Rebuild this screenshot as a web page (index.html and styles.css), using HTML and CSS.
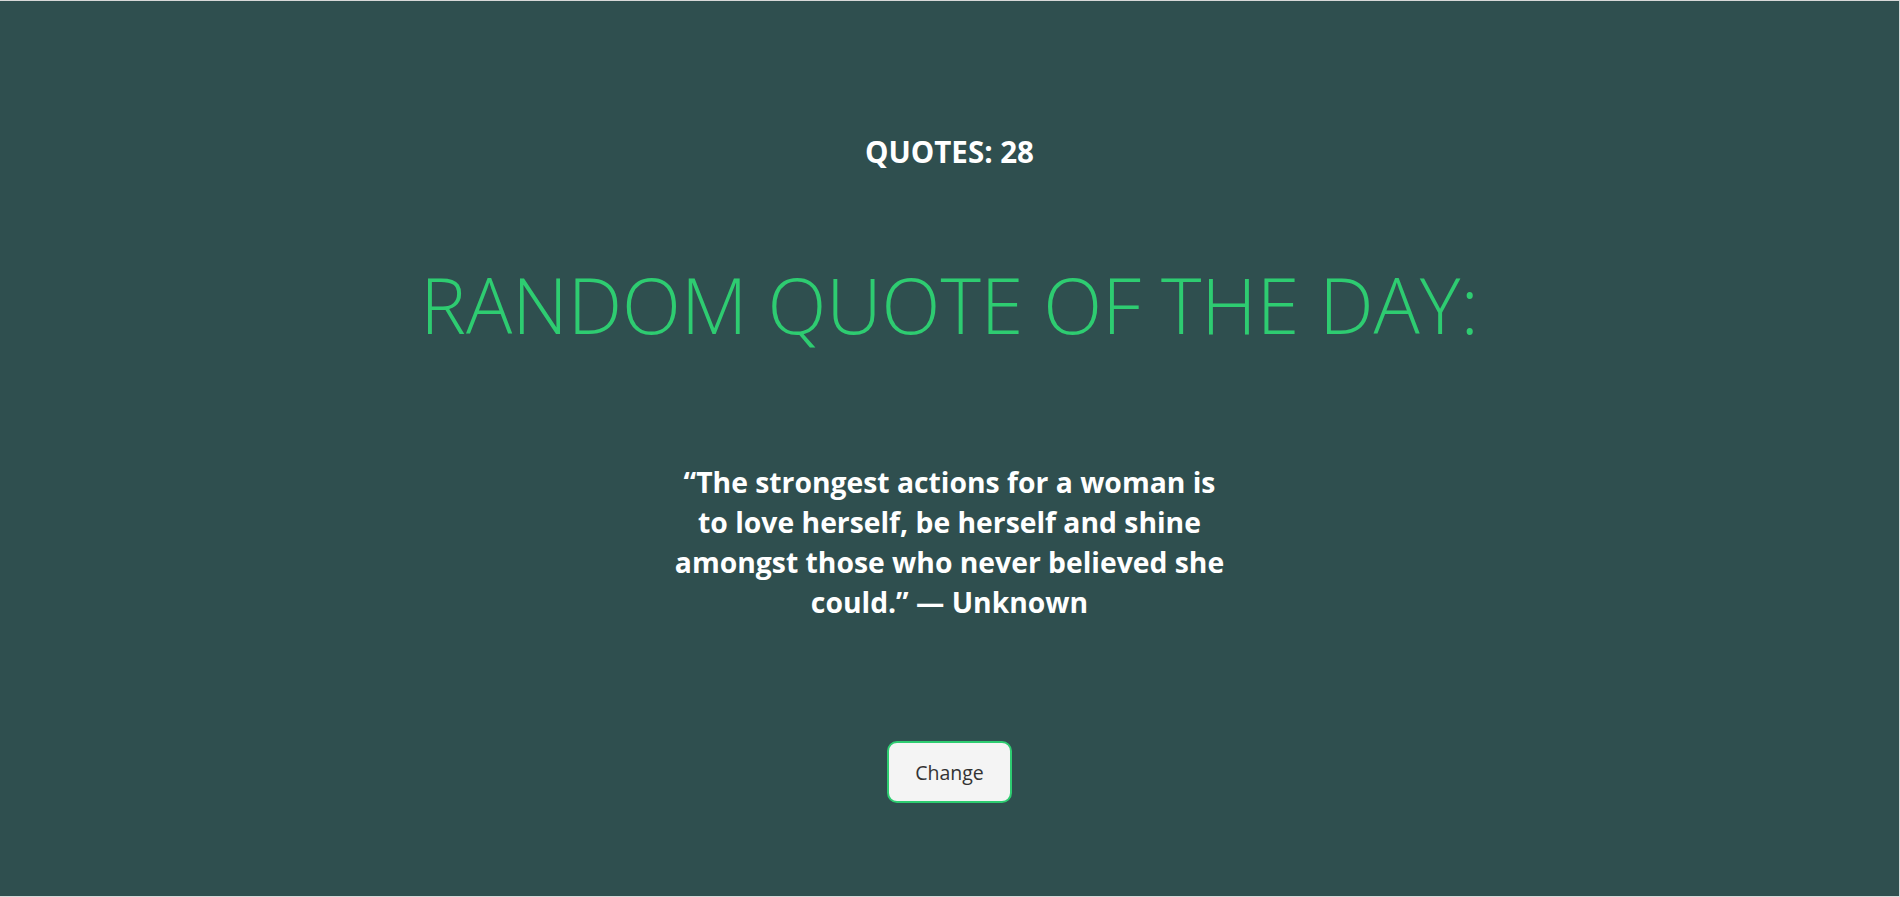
FILE: index.html
```html
<!DOCTYPE html>
<html lang="en">
<head>
<meta charset="utf-8">
<title>Random Quote</title>
<link rel="stylesheet" href="styles.css">
</head>
<body>
<main class="page">
  <h2 class="count">QUOTES: 28</h2>
  <h1 class="title">RANDOM QUOTE OF THE DAY:</h1>
  <p class="quote">“The strongest actions for a woman is to love herself, be herself and shine amongst those who never believed she could.” — Unknown</p>
  <button class="change" type="button">Change</button>
</main>
</body>
</html>
```

FILE: styles.css
```css
html, body {
  margin: 0;
  padding: 0;
  background: #2f4f4f;
}

.page {
  box-sizing: border-box;
  height: 897px;
  border-top: 1px solid #d8d8d8;
  border-right: 1px solid #d8d8d8;
  border-bottom: 1px solid #d8d8d8;
  display: flex;
  flex-direction: column;
  align-items: center;
  font-family: "Open Sans", "Noto Sans", sans-serif;
  text-align: center;
}

.count {
  margin: 134px 0 0;
  font-size: 29.5px;
  line-height: 34px;
  font-weight: 700;
  color: #ffffff;
}

.title {
  margin: 86px 0 0;
  font-size: 77px;
  line-height: 100px;
  font-weight: 300;
  color: #2ecc71;
}

.quote {
  margin: 107px 0 0;
  width: 560px;
  font-size: 28.3px;
  line-height: 40px;
  font-weight: 700;
  color: #ffffff;
}

.change {
  margin-top: 119px;
  width: 125px;
  height: 62px;
  background: #f4f4f4;
  border: 2px solid #2ecc71;
  border-radius: 10px;
  font-family: "Open Sans", "Noto Sans", sans-serif;
  font-size: 19.5px;
  color: #333333;
}
```
